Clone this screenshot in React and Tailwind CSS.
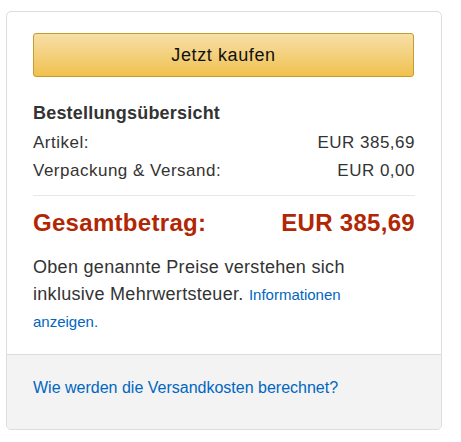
import React from 'react';

const rows = [
  { label: 'Artikel:', value: 'EUR 385,69' },
  { label: 'Verpackung & Versand:', value: 'EUR 0,00' },
];

export default function App() {
  return (
    <div className="min-h-screen bg-white pt-[11px] pl-[6px] font-['Liberation_Sans',Arial,sans-serif]">
      <div className="w-[436px] rounded-[5px] border border-[#dddddd] overflow-hidden">
        <div className="px-[26px] pt-[21px] pb-[19px]">
          <button className="w-[381px] h-[44px] rounded-[3px] border border-[#c89b2e] bg-gradient-to-b from-[#f7dfa5] to-[#f0c14b] text-[18px] text-[#111111] tracking-[0.6px]">
            Jetzt kaufen
          </button>

          <h3 className="mt-[24px] text-[18px] font-bold text-[#333333] leading-[24px] tracking-[0.2px]">Bestellungsübersicht</h3>

          <div className="mt-[4px]">
            {rows.map((r) => (
              <div key={r.label} className="flex justify-between h-[28px] items-center text-[17px] text-[#333333] tracking-[0.5px]">
                <span>{r.label}</span>
                <span>{r.value}</span>
              </div>
            ))}
          </div>

          <div className="mt-[10px] border-t border-[#e7e7e7]" />

          <div className="mt-[9px] flex justify-between text-[24px] font-bold text-[#b12704] leading-[36px] tracking-[0.3px]">
            <span>Gesamtbetrag:</span>
            <span>EUR 385,69</span>
          </div>

          <p className="mt-[13px] w-[345px] text-[18px] leading-[27px] text-[#333333] tracking-[0.3px]">
            Oben genannte Preise verstehen sich inklusive Mehrwertsteuer.{' '}
            <span className="text-[15px] tracking-[0px] text-[#0066c0]">Informationen anzeigen.</span>
          </p>
        </div>

        <div className="border-t border-[#dddddd] bg-[#f3f3f3] px-[26px] pt-[21px] pb-[29px]">
          <a href="#" className="text-[16px] text-[#0066c0] leading-[22px]">Wie werden die Versandkosten berechnet?</a>
        </div>
      </div>
    </div>
  );
}
